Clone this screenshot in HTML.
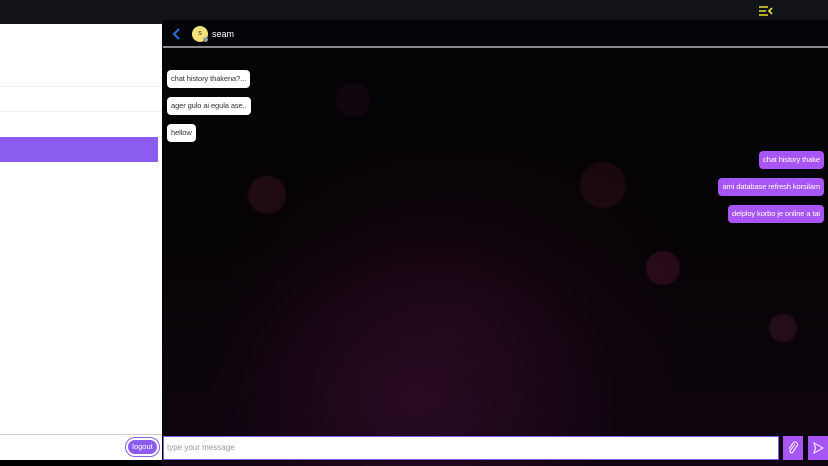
<!DOCTYPE html><html><head><style>
*{margin:0;padding:0;box-sizing:border-box}
body{width:828px;height:466px;overflow:hidden;background:#000;font-family:"Liberation Sans",sans-serif;position:relative}
.top{position:absolute;left:0;top:0;width:828px;height:24px;background:#121317}
.chat{position:absolute;left:163px;top:20px;width:665px;height:446px;background:
radial-gradient(circle at 104px 175px,rgba(90,30,45,.3) 0 18px,transparent 20px),
radial-gradient(circle at 440px 165px,rgba(90,25,50,.25) 0 22px,transparent 24px),
radial-gradient(circle at 500px 248px,rgba(110,25,65,.3) 0 16px,transparent 18px),
radial-gradient(circle at 620px 308px,rgba(110,40,70,.25) 0 13px,transparent 15px),
radial-gradient(circle at 190px 80px,rgba(60,15,40,.25) 0 16px,transparent 18px),
radial-gradient(ellipse at 290px 300px,rgba(80,15,60,.22),transparent 45%),
radial-gradient(ellipse at 250px 380px,rgba(110,25,85,.22),transparent 35%),
linear-gradient(#030305,#060305 50%,#100510)}
.hdr{position:absolute;left:163px;top:20px;width:665px;height:28px;background:#030509;border-bottom:2px solid #8a8a8a}
.left{position:absolute;left:0;top:24px;width:162px;height:412px;background:#fff}
.line{position:absolute;left:0;width:162px;height:1px;background:#eee}
.sel{position:absolute;left:0;top:137px;width:158px;height:25px;background:#8c5cf0}
.msg{position:absolute;font-size:7.5px;letter-spacing:-.1px;padding:0 4px;height:18px;line-height:18px;border-radius:4px;white-space:nowrap}
.in{background:#fff;color:#333;left:167px}
.out{background:#a855f7;color:#fff;right:4px}
</style></head><body>
<div class="top"></div>
<div class="chat"></div>
<div class="hdr"></div>
<svg style="position:absolute;left:172px;top:28px" width="10" height="12"><path d="M7 1 L2 6 L7 11" stroke="#2f6fe0" stroke-width="2" fill="none"/></svg>
<div style="position:absolute;left:192px;top:26px;width:16px;height:16px;border-radius:50%;background:#f3e27a;font-size:7px;text-align:center;line-height:16px;color:#333">s</div>
<div style="position:absolute;left:203px;top:37px;width:5px;height:5px;border-radius:50%;background:#999"></div>
<div style="position:absolute;left:212px;top:29px;color:#fff;font-size:9px">seam</div>
<svg style="position:absolute;left:759px;top:6px" width="14" height="10"><path d="M0 1h9M0 5h7M0 9h9M13 2l-3 3 3 3" stroke="#e8e030" stroke-width="1.6" fill="none"/></svg>
<div class="left"><div class="line" style="top:62px"></div><div class="line" style="top:87px"></div></div>
<div class="sel"></div>
<div class="msg in" style="top:70px">chat history thakena?...</div>
<div class="msg in" style="top:97px">ager gulo ai egula ase..</div>
<div class="msg in" style="top:124px">hellow</div>
<div class="msg out" style="top:151px">chat history thake</div>
<div class="msg out" style="top:178px">ami database refresh korsilam</div>
<div class="msg out" style="top:205px">delploy korbo je online a tai</div>
<div style="position:absolute;left:0;top:434px;width:162px;height:26px;background:#fff;border-top:1px solid #ccc"></div>
<div style="position:absolute;left:126px;top:438px;width:33px;height:18px;border-radius:9px;background:#8c5cf0;border:2px solid #fff;box-shadow:0 0 0 1px #8c5cf0;color:#fff;font-size:7.5px;text-align:center;line-height:14px">logout</div>
<div style="position:absolute;left:163px;top:436px;width:616px;height:24px;background:#fff;border:1px solid #7c5ce0;color:#999;font-size:8px;line-height:22px;padding-left:3px">type your message</div>
<div style="position:absolute;left:783px;top:436px;width:20px;height:24px;background:#a855f7"></div>
<svg style="position:absolute;left:787px;top:441px" width="12" height="14"><path d="M8 3 L3 10 a1.5 1.5 0 0 0 2.5 1.5 L10 5 a2.5 2.5 0 0 0 -4 -3 L2 8" stroke="#fff" stroke-width="1" fill="none"/></svg>
<div style="position:absolute;left:808px;top:436px;width:20px;height:24px;background:#a855f7"></div>
<svg style="position:absolute;left:812px;top:442px" width="12" height="12"><path d="M2 1 L11 6 L2 11 L3.5 6 Z" stroke="#fff" stroke-width="1" fill="none"/></svg>
</body></html>
